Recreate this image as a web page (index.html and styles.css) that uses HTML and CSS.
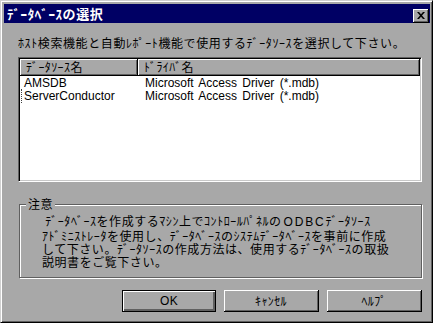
FILE: index.html
```html
<!DOCTYPE html>
<html lang="ja">
<head>
<meta charset="utf-8">
<title>ﾃﾞｰﾀﾍﾞｰｽの選択</title>
<link rel="stylesheet" href="styles.css">
</head>
<body>
<div class="window">
  <div class="titlebar">
    <span class="title">ﾃﾞｰﾀﾍﾞｰｽの選択</span>
    <span class="close-btn">
      <svg width="8" height="7" viewBox="0 0 8 7"><path d="M0 0h2l2 2.2L6 0h2L5 3.5 8 7H6L4 4.8 2 7H0l3-3.5z" fill="#000"/></svg>
    </span>
  </div>
  <div class="content">
    <p class="prompt">ﾎｽﾄ検索機能と自動ﾚﾎﾟｰﾄ機能で使用するﾃﾞｰﾀｿｰｽを選択して下さい。</p>
    <div class="listview">
      <div class="lv-header">
        <div class="hcell col1">ﾃﾞｰﾀｿｰｽ名</div>
        <div class="hcell col2">ﾄﾞﾗｲﾊﾞ名</div>
      </div>
      <div class="lv-rows">
        <div class="row"><span class="col1 cell">AMSDB</span><span class="col2 cell">Microsoft Access Driver (*.mdb)</span></div>
        <div class="row"><span class="col1 cell"><span class="focus">ServerConductor</span></span><span class="col2 cell">Microsoft Access Driver (*.mdb)</span></div>
      </div>
    </div>
    <div class="group">
      <span class="legend">注意</span>
      <p class="note"> ﾃﾞｰﾀﾍﾞｰｽを作成するﾏｼﾝ上でｺﾝﾄﾛｰﾙﾊﾟﾈﾙの<span class="odbc">ODBC</span>ﾃﾞｰﾀｿｰｽ<br>ｱﾄﾞﾐﾆｽﾄﾚｰﾀを使用し、ﾃﾞｰﾀﾍﾞｰｽのｼｽﾃﾑﾃﾞｰﾀﾍﾞｰｽを事前に作成<br>して下さい。ﾃﾞｰﾀｿｰｽの作成方法は、使用するﾃﾞｰﾀﾍﾞｰｽの取扱<br>説明書をご覧下さい。</p>
    </div>
    <div class="buttons">
      <button class="btn default">OK</button>
      <button class="btn">ｷｬﾝｾﾙ</button>
      <button class="btn">ﾍﾙﾌﾟ</button>
    </div>
  </div>
</div>
</body>
</html>
```
FILE: styles.css
```css
html, body {
  margin: 0;
  padding: 0;
  background: #ffffff;
}
body {
  font-family: "Noto Sans CJK JP", sans-serif;
  font-size: 12px;
  color: #000;
}
.window {
  box-sizing: border-box;
  width: 433px;
  height: 323px;
  background: #a8a8a8;
  border-top: 1px solid #d0d0d0;
  border-left: 1px solid #d0d0d0;
  border-right: 1px solid #000;
  border-bottom: 1px solid #000;
  box-shadow: inset 1px 1px #ffffff, inset -1px -1px #606060;
  padding: 3px 2px 2px 3px;
  display: flex;
  flex-direction: column;
}
.titlebar {
  height: 19px;
  background: #000064;
  display: flex;
  align-items: center;
  justify-content: space-between;
  padding: 0 1px 0 3px;
}
.title {
  color: #fff;
  font-weight: bold;
  font-size: 13px;
  letter-spacing: 0.6px;
  line-height: 19px;
}
.close-btn {
  box-sizing: border-box;
  width: 16px;
  height: 14px;
  margin-top: 4px;
  background: #a8a8a8;
  border-right: 1px solid #000;
  border-bottom: 1px solid #000;
  box-shadow: inset 1px 1px #fff, inset -1px -1px #606060;
  display: flex;
  align-items: center;
  justify-content: center;
}
.content {
  padding: 0 8px 0 14px;
  display: flex;
  flex-direction: column;
}
.prompt {
  margin: 13px 0 0 0;
  line-height: 13px;
  letter-spacing: 0.6px;
  white-space: nowrap;
}
.listview {
  box-sizing: border-box;
  margin-top: 8px;
  height: 125px;
  background: #fff;
  border-top: 1px solid #606060;
  border-left: 1px solid #606060;
  border-right: 1px solid #fff;
  border-bottom: 1px solid #fff;
  box-shadow: inset 1px 1px #000, inset -1px -1px #c8c8c8;
  padding: 1px;
}
.lv-header {
  display: flex;
  height: 17px;
  background: #a8a8a8;
}
.hcell {
  box-sizing: border-box;
  height: 17px;
  line-height: 15px;
  letter-spacing: 0.4px;
  border-right: 1px solid #000;
  border-bottom: 1px solid #000;
  box-shadow: inset 1px 1px #fff, inset -1px -1px #606060;
  white-space: nowrap;
}
.hcell.col1 {
  width: 118px;
  padding-left: 6px;
}
.hcell.col2 {
  flex: 1;
  padding-left: 6px;
}
.lv-rows {
  padding-top: 1px;
}
.row {
  display: flex;
  height: 13px;
  line-height: 13px;
  font-family: "Liberation Sans", "Noto Sans CJK JP", sans-serif;
  font-size: 12px;
  white-space: nowrap;
}
.cell.col1 {
  width: 114px;
  padding-left: 4px;
  flex: none;
}
.cell.col2 {
  padding-left: 7px;
  word-spacing: 2px;
}
.focus {
  border-left: 1px dotted #404040;
  padding-left: 2px;
  margin-left: -3px;
}
.group {
  position: relative;
  margin: 22px 0 0 1px;
  height: 72px;
  border: 1px solid #606060;
  box-shadow: inset 1px 1px #fff, 1px 1px #fff;
}
.legend {
  position: absolute;
  top: -7px;
  left: 6px;
  padding: 0 2px;
  line-height: 12px;
  background: #a8a8a8;
  letter-spacing: 0.4px;
}
.note {
  margin: 0;
  padding: 9px 0 0 22px;
  line-height: 13px;
  letter-spacing: 0.55px;
  white-space: pre;
}
.odbc {
  font-family: "Liberation Sans", sans-serif;
  letter-spacing: 1.8px;
  padding-left: 2px;
}
.buttons {
  margin-top: 12px;
  display: flex;
  justify-content: flex-end;
  gap: 8px;
}
.btn {
  box-sizing: border-box;
  width: 95px;
  height: 22px;
  margin: 0;
  padding: 0;
  background: #a8a8a8;
  font-family: "Liberation Sans", "Noto Sans CJK JP", sans-serif;
  font-size: 12px;
  color: #000;
  border: none;
  border-right: 1px solid #000;
  border-bottom: 1px solid #000;
  box-shadow: inset 1px 1px #fff, inset -1px -1px #606060;
  letter-spacing: 0.4px;
}
.btn.default {
  width: 94px;
  border: 1px solid #000;
  box-shadow: inset 1px 1px #fff, inset -2px -2px #606060;
}
```
